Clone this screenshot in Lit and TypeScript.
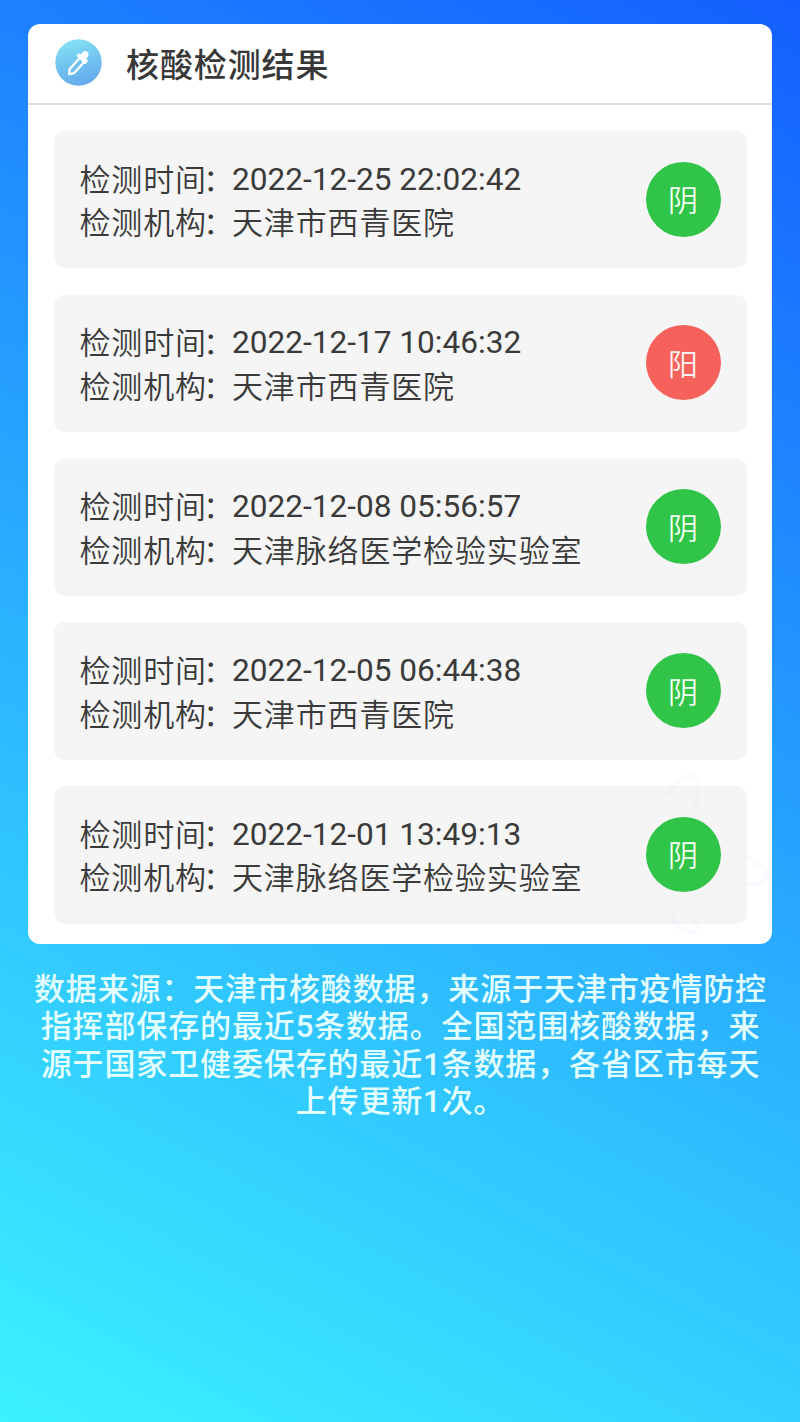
import { LitElement, html, css } from "lit";
import { customElement, property } from "lit/decorators.js";
import { classMap } from "lit/directives/class-map.js";

interface TestRecord {
  time: string;
  org: string;
  positive?: boolean;
}

const RECORDS: TestRecord[] = [
  { time: "2022-12-25 22:02:42", org: "天津市西青医院" },
  { time: "2022-12-17 10:46:32", org: "天津市西青医院", positive: true },
  { time: "2022-12-08 05:56:57", org: "天津脉络医学检验实验室" },
  { time: "2022-12-05 06:44:38", org: "天津市西青医院" },
  { time: "2022-12-01 13:49:13", org: "天津脉络医学检验实验室" },
];

@customElement("result-row")
export class ResultRow extends LitElement {
  @property({ attribute: false }) record!: TestRecord;

  static styles = css`
    :host {
      display: flex;
      align-items: center;
      justify-content: space-between;
      box-sizing: border-box;
      height: 137.4px;
      padding: 0 26px 1px 25.5px;
      border-radius: 10px;
      background: #f5f5f5;
      color: #3a3a3a;
    }
    .lines {
      display: grid;
      grid-template-columns: 152.5px auto;
      grid-auto-rows: 43.5px;
      line-height: 43.5px;
      white-space: nowrap;
      font-size: 31px;
      letter-spacing: 0.85px;
      font-weight: 350;
    }
    .last {
      letter-spacing: -3.2px;
    }
    .time {
      padding-top: 2px;
      font-family: Roboto, sans-serif;
      font-size: 31.6px;
      letter-spacing: 0;
      font-weight: 400;
    }
    .badge {
      display: flex;
      align-items: center;
      justify-content: center;
      box-sizing: border-box;
      width: 75px;
      height: 75px;
      padding-bottom: 2px;
      border-radius: 50%;
      background: #30c448;
      color: #f2fff3;
      font-size: 30px;
      font-weight: 350;
      line-height: 40px;
    }
    .badge.positive {
      background: #f7615b;
      color: #fff3f1;
    }
  `;

  render() {
    const { time, org, positive = false } = this.record;
    return html`
      <div class="lines">
        <span>检测时<span class="last">间</span>：</span><span class="time">${time}</span>
        <span>检测机<span class="last">构</span>：</span><span>${org}</span>
      </div>
      <div class=${classMap({ badge: true, positive })}>${positive ? "阳" : "阴"}</div>
    `;
  }
}

@customElement("app-root")
export class AppRoot extends LitElement {
  static styles = css`
    :host {
      display: block;
      box-sizing: border-box;
      height: 1422px;
      padding: 24px 28px 0;
      overflow: hidden;
      font-family: "Noto Sans CJK SC", sans-serif;
      background: linear-gradient(208deg, #145fff, #3cf2ff);
    }
    .card {
      position: relative;
      box-sizing: border-box;
      width: 744px;
      height: 920px;
      border-radius: 12px;
      background: #fff;
    }
    .head {
      display: flex;
      align-items: center;
      gap: 24px;
      box-sizing: border-box;
      height: 81px;
      padding: 0 27px 2px;
      border-bottom: 2.5px solid #dcdcdc;
    }
    .logo {
      flex: none;
      width: 47px;
      height: 47px;
    }
    .title {
      margin: 0;
      color: #383838;
      font-size: 33px;
      font-weight: 500;
      letter-spacing: 0.9px;
      line-height: 44px;
    }
    .list {
      display: flex;
      flex-direction: column;
      gap: 26.4px;
      padding: 26px 25.5px 0 26px;
    }
    .mark {
      position: absolute;
      left: 570px;
      top: 735px;
      width: 174px;
      height: 185px;
      pointer-events: none;
    }
    .note {
      margin: 27px -10.5px 0 -9.5px;
      color: #e4ffff;
      text-align: center;
      font-family: Roboto, "Noto Sans CJK SC", sans-serif;
      font-size: 31px;
      font-weight: 500;
      letter-spacing: 0.87px;
      line-height: 37.3px;
      white-space: nowrap;
    }
  `;

  render() {
    return html`
      <section class="card">
        <header class="head">
          <svg class="logo" viewBox="0 0 47 47">
            <defs>
              <linearGradient id="g" x1="0.35" y1="0" x2="0.6" y2="1">
                <stop offset="0" stop-color="#83e2f4" />
                <stop offset="0.5" stop-color="#71c3f0" />
                <stop offset="1" stop-color="#65a9ed" />
              </linearGradient>
            </defs>
            <circle cx="23.5" cy="23.5" r="23.2" fill="url(#g)" />
            <path d="M25 18.4 14.4 30.4 14.1 35.2 19 34.2 29.6 22.4" fill="none" stroke="#fff"
              stroke-width="2.3" stroke-linejoin="round" stroke-linecap="round" />
            <path d="M21.8 16.4 24 14.8 26 16 27.8 13.4Q30 11.5 32.3 13.2 34.2 15.4 32.2 17.8L31 19.6 32.4 22 30 25Z"
              fill="#fff" stroke="#fff" stroke-width="1" stroke-linejoin="round" />
          </svg>
          <h1 class="title">核酸检测结果</h1>
        </header>
        <div class="list">
          ${RECORDS.map((r) => html`<result-row .record=${r}></result-row>`)}
        </div>
        <svg class="mark" viewBox="0 0 174 185" fill="none" stroke="#dfeafa" stroke-opacity="0.18"
          stroke-width="5" stroke-linecap="round">
          <path d="M70 36Q82 16 95 17 103 20 97 48" />
          <path d="M146 97Q170 108 168 118 162 128 142 125" />
          <path d="M74 150Q74 166 88 173 102 175 98 160" />
        </svg>
      </section>
      <p class="note">
        数据来源：天津市核酸数据，来源于天津市疫情防控<br />指挥部保存的最近5条数据。全国范围核酸数据，来<br />源于国家卫健委保存的最近1条数据，各省区市每天<br />上传更新1次。
      </p>
    `;
  }
}
